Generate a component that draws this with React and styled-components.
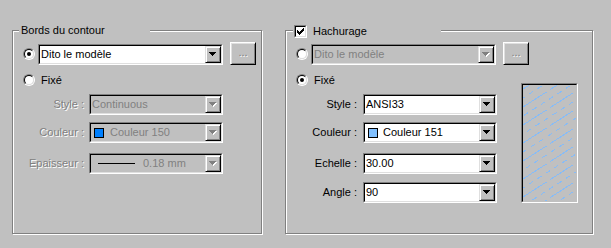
import React from 'react';
import styled, { createGlobalStyle } from 'styled-components';

const GlobalStyle = createGlobalStyle`
  html, body { margin: 0; padding: 0; background: #c0c0c0; }
  body {
    width: 611px; height: 248px; overflow: hidden;
    font-family: "Liberation Sans", Arial, sans-serif;
    font-size: 11px; color: #000;
  }
`;

const Dialog = styled.div`
  box-sizing: border-box;
  width: 611px;
  height: 248px;
  display: flex;
  align-items: flex-start;
  gap: 23px;
  padding: 30px 0 0 12px;
  background: #c0c0c0;
  font-family: "Liberation Sans", Arial, sans-serif;
  font-size: 11px;
  line-height: 13px;
`;

const Group = styled.div`
  position: relative;
  box-sizing: border-box;
  width: ${(p) => p.$w}px;
  height: 204px;
  border: 1px solid #808080;
  box-shadow: inset 1px 1px 0 #fff, 1px 1px 0 #fff;
  padding: 11px 0 0 10px;
  display: flex;
  flex-direction: column;
`;

const Legend = styled.div`
  position: absolute;
  top: -7px;
  left: ${(p) => p.$left}px;
  width: ${(p) => p.$w}px;
  height: ${(p) => p.$h}px;
  box-sizing: border-box;
  padding-left: ${(p) => p.$pad}px;
  background: #c0c0c0;
  display: flex;
  align-items: center;
  gap: 6px;
  white-space: nowrap;
`;

const TopRow = styled.div`
  display: flex;
  align-items: center;
  height: 23px;
`;

const OptionRow = styled.div`
  display: flex;
  align-items: center;
  gap: 6px;
  height: 12px;
  margin-top: 9px;
`;

const FieldRow = styled.div`
  display: flex;
  align-items: center;
  gap: ${(p) => p.$gap}px;
  height: 21px;
  margin-top: ${(p) => p.$mt}px;
`;

const FieldLabel = styled.span`
  flex: none;
  width: 61px;
  text-align: right;
  white-space: nowrap;
  color: ${(p) => (p.$disabled ? '#808080' : '#000')};
  text-shadow: ${(p) => (p.$disabled ? '1px 1px 0 #fff' : 'none')};
`;

const ComboOuter = styled.div`
  flex: none;
  box-sizing: border-box;
  width: ${(p) => p.$w}px;
  height: 21px;
  margin-left: ${(p) => p.$ml || 0}px;
  align-self: ${(p) => (p.$end ? 'flex-end' : 'auto')};
  border: 1px solid;
  border-color: #808080 #fff #fff #808080;
`;

const ComboField = styled.div`
  box-sizing: border-box;
  height: 100%;
  border: 1px solid;
  border-color: #000 #dfdfdf #dfdfdf #000;
  background: ${(p) => (p.$disabled ? '#c0c0c0' : '#fff')};
  display: flex;
  align-items: center;
`;

const ComboValue = styled.span`
  flex: 1;
  min-width: 0;
  display: flex;
  align-items: center;
  gap: ${(p) => p.$gap || 0}px;
  padding-left: ${(p) => p.$pad}px;
  white-space: nowrap;
  overflow: hidden;
  color: ${(p) => (p.$disabled ? '#808080' : '#000')};
`;

const DropButton = styled.span`
  flex: none;
  box-sizing: border-box;
  width: 16px;
  height: 17px;
  border: 1px solid;
  border-color: #dfdfdf #000 #000 #dfdfdf;
  box-shadow: inset 1px 1px 0 #fff, inset -1px -1px 0 #808080;
  background: #c0c0c0;
  display: flex;
  align-items: center;
  justify-content: center;
`;

const Swatch = styled.span`
  flex: none;
  box-sizing: border-box;
  width: 10px;
  height: 10px;
  border: 1px solid #000;
  background: ${(p) => p.$color};
`;

const ThicknessLine = styled.span`
  flex: none;
  width: 37px;
  height: 1px;
  background: #000;
`;

const DotsButton = styled.div`
  flex: none;
  box-sizing: border-box;
  width: 26px;
  height: 23px;
  margin-left: 7px;
  border: 1px solid;
  border-color: #fff #000 #000 #fff;
  box-shadow: inset 1px 1px 0 #dfdfdf, inset -1px -1px 0 #808080;
  display: flex;
  align-items: center;
  justify-content: center;
  padding-bottom: 2px;
  color: #808080;
  text-shadow: 1px 1px 0 #fff;
`;

const RadioOuter = styled.span`
  flex: none;
  box-sizing: border-box;
  width: 12px;
  height: 12px;
  border-radius: 50%;
  border: 1px solid;
  border-color: #808080 #fff #fff #808080;
  display: flex;
`;

const RadioInner = styled.span`
  flex: 1;
  box-sizing: border-box;
  border-radius: 50%;
  border: 1px solid;
  border-color: #000 #dfdfdf #dfdfdf #000;
  background: #fff;
  display: flex;
  align-items: center;
  justify-content: center;
`;

const RadioDot = styled.span`
  width: 4px;
  height: 4px;
  border-radius: 50%;
  background: #000;
`;

const CheckOuter = styled.span`
  flex: none;
  box-sizing: border-box;
  width: 13px;
  height: 13px;
  border: 1px solid;
  border-color: #808080 #fff #fff #808080;
  display: flex;
`;

const CheckInner = styled.span`
  flex: 1;
  box-sizing: border-box;
  border: 1px solid;
  border-color: #000 #dfdfdf #dfdfdf #000;
  background: #fff;
  display: flex;
  align-items: center;
  justify-content: center;
`;

const Body = styled.div`
  display: flex;
  align-items: flex-start;
`;

const Column = styled.div`
  display: flex;
  flex-direction: column;
  width: 201px;
`;

const Preview = styled.div`
  flex: none;
  align-self: flex-end;
  box-sizing: border-box;
  width: 57px;
  height: 120px;
  margin-left: 24px;
  border: 1px solid;
  border-color: #808080 #fff #fff #808080;
  display: flex;
`;

const PreviewInner = styled.div`
  flex: 1;
  box-sizing: border-box;
  border: 1px solid;
  border-color: #000 #c0c0c0 #c0c0c0 #000;
  background: #c0c0c0;
  overflow: hidden;
  display: flex;
`;

const Arrow = ({ disabled }) => (
  <svg width="8" height="5" viewBox="0 0 8 5" shapeRendering="crispEdges">
    {disabled && <path d="M1 1h7v1h-7zM2 2h5v1h-5zM3 3h3v1h-3zM4 4h1v1h-1z" fill="#fff" />}
    <path d="M0 0h7v1h-7zM1 1h5v1h-5zM2 2h3v1h-3zM3 3h1v1h-1z" fill={disabled ? '#808080' : '#000'} />
  </svg>
);

const CheckMark = () => (
  <svg width="7" height="7" viewBox="0 0 7 7" shapeRendering="crispEdges">
    <path
      d="M6 0h1v1h-1zM5 1h2v1h-2zM0 2h1v1h-1zM4 2h3v1h-3zM0 3h2v1h-2zM3 3h3v1h-3zM0 4h5v1h-5zM1 5h3v1h-3zM2 6h1v1h-1z"
      fill="#000"
    />
  </svg>
);

const Radio = ({ checked }) => (
  <RadioOuter>
    <RadioInner>{checked && <RadioDot />}</RadioInner>
  </RadioOuter>
);

const Checkbox = () => (
  <CheckOuter>
    <CheckInner>
      <CheckMark />
    </CheckInner>
  </CheckOuter>
);

const Combo = ({ w, disabled, pad = 1, gap, ml, end, children }) => (
  <ComboOuter $w={w} $ml={ml} $end={end}>
    <ComboField $disabled={disabled}>
      <ComboValue $disabled={disabled} $pad={pad} $gap={gap}>
        {children}
      </ComboValue>
      <DropButton>
        <Arrow disabled={disabled} />
      </DropButton>
    </ComboField>
  </ComboOuter>
);

const HatchLines = () => {
  const lines = [];
  for (let k = -1; k < 20; k++) {
    const b = k * 9 + 4;
    const dashed = k % 2 !== 0;
    lines.push(
      <line
        key={k}
        x1={0}
        y1={b}
        x2={53}
        y2={b - 34}
        stroke="#86bcf8"
        strokeWidth="1"
        strokeDasharray={dashed ? '5 5' : '28 4'}
        strokeDashoffset={dashed ? (k * 3) % 10 : 0}
      />
    );
  }
  return (
    <svg width="53" height="116" viewBox="0 0 53 116" shapeRendering="crispEdges">
      {lines}
    </svg>
  );
};

export default function App() {
  return (
    <>
      <GlobalStyle />
      <Dialog>
        <Group $w={250}>
          <Legend $left={6} $w={131} $h={13} $pad={2}>
            Bords du contour
          </Legend>
          <TopRow>
            <Radio checked />
            <Combo w={185} ml={3} end>
              Dito le modèle
            </Combo>
            <DotsButton>...</DotsButton>
          </TopRow>
          <OptionRow>
            <Radio />
            <span>Fixé</span>
          </OptionRow>
          <FieldRow $gap={5} $mt={8}>
            <FieldLabel $disabled>Style :</FieldLabel>
            <Combo w={134} disabled>
              Continuous
            </Combo>
          </FieldRow>
          <FieldRow $gap={5} $mt={7}>
            <FieldLabel $disabled>Couleur :</FieldLabel>
            <Combo w={134} disabled pad={3} gap={6}>
              <Swatch $color="#0080ff" />
              Couleur 150
            </Combo>
          </FieldRow>
          <FieldRow $gap={5} $mt={10}>
            <FieldLabel $disabled>Epaisseur :</FieldLabel>
            <Combo w={134} disabled pad={7} gap={8}>
              <ThicknessLine />
              0.18 mm
            </Combo>
          </FieldRow>
        </Group>

        <Group $w={308}>
          <Legend $left={7} $w={148} $h={15} $pad={1}>
            <Checkbox />
            Hachurage
          </Legend>
          <TopRow>
            <Radio />
            <Combo w={185} ml={3} end disabled>
              Dito le modèle
            </Combo>
            <DotsButton>...</DotsButton>
          </TopRow>
          <Body>
            <Column>
              <OptionRow>
                <Radio checked />
                <span>Fixé</span>
              </OptionRow>
              <FieldRow $gap={6} $mt={8}>
                <FieldLabel>Style :</FieldLabel>
                <Combo w={134}>ANSI33</Combo>
              </FieldRow>
              <FieldRow $gap={6} $mt={7}>
                <FieldLabel>Couleur :</FieldLabel>
                <Combo w={134} pad={3} gap={5}>
                  <Swatch $color="#80c0ff" />
                  Couleur 151
                </Combo>
              </FieldRow>
              <FieldRow $gap={6} $mt={10}>
                <FieldLabel>Echelle :</FieldLabel>
                <Combo w={134}>30.00</Combo>
              </FieldRow>
              <FieldRow $gap={6} $mt={8}>
                <FieldLabel>Angle :</FieldLabel>
                <Combo w={134}>90</Combo>
              </FieldRow>
            </Column>
            <Preview>
              <PreviewInner>
                <HatchLines />
              </PreviewInner>
            </Preview>
          </Body>
        </Group>
      </Dialog>
    </>
  );
}
